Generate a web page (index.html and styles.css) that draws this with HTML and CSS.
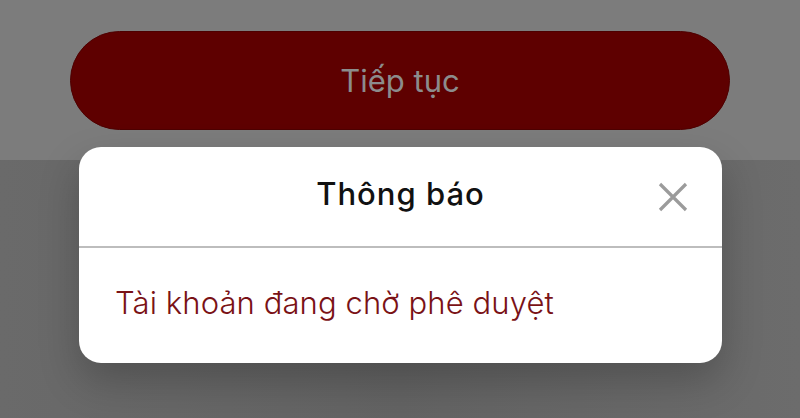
FILE: index.html
```html
<!DOCTYPE html>
<html lang="vi">
<head>
<meta charset="utf-8">
<link rel="stylesheet" href="styles.css">
</head>
<body>
<div class="screen">
  <div class="top">
    <button class="btn">Tiếp tục</button>
  </div>
  <div class="bottom"></div>
  <div class="modal">
    <div class="modal-head">
      <span class="modal-title">Thông báo</span>
      <span class="close">
        <svg width="32" height="32" viewBox="0 0 32 32"><path d="M3 3 L29 29 M29 3 L3 29" stroke="#9b9b9b" stroke-width="3.2" stroke-linecap="butt" fill="none"/></svg>
      </span>
    </div>
    <div class="modal-body">Tài khoản đang chờ phê duyệt</div>
  </div>
</div>
</body>
</html>
```
FILE: styles.css
```css
html, body {
  margin: 0;
  padding: 0;
}
body {
  width: 800px;
  height: 418px;
  overflow: hidden;
  font-family: Inter, "Noto Sans", sans-serif;
}
.screen {
  position: relative;
  width: 800px;
  height: 418px;
  display: flex;
  flex-direction: column;
}
.top {
  height: 160px;
  background: #7c7c7c;
  padding: 31px 70px 0 70px;
  box-sizing: border-box;
}
.btn {
  width: 100%;
  height: 99px;
  border-radius: 50px;
  border: 1px solid #4e0000;
  background: #5e0000;
  color: #8c8c8c;
  font-family: Inter, "Noto Sans", sans-serif;
  font-size: 31px;
  font-weight: 400;
  padding: 0;
  box-sizing: border-box;
  letter-spacing: 0;
}
.bottom {
  flex: 1;
  background: linear-gradient(to right, #6a6a6a, #636363 50%, #6c6c6c);
}
.modal {
  position: absolute;
  left: 79px;
  top: 147px;
  width: 643px;
  height: 216px;
  background: #fff;
  border-radius: 22px;
  box-shadow: 0 18px 40px rgba(0,0,0,0.22);
  display: flex;
  flex-direction: column;
}
.modal-head {
  height: 99px;
  border-bottom: 2px solid #bdbdbd;
  display: flex;
  align-items: center;
  justify-content: center;
  position: relative;
}
.modal-title {
  font-size: 31px;
  font-weight: 500;
  color: #111;
  margin-top: -7px;
  letter-spacing: 1px;
}
.close {
  position: absolute;
  right: 33px;
  top: 34px;
  width: 32px;
  height: 32px;
  display: block;
}
.close svg { display: block; }
.modal-body {
  padding: 36px 0 0 36px;
  font-size: 31px;
  font-weight: 300;
  color: #7a1216;
  letter-spacing: 0.1px;
}
```
